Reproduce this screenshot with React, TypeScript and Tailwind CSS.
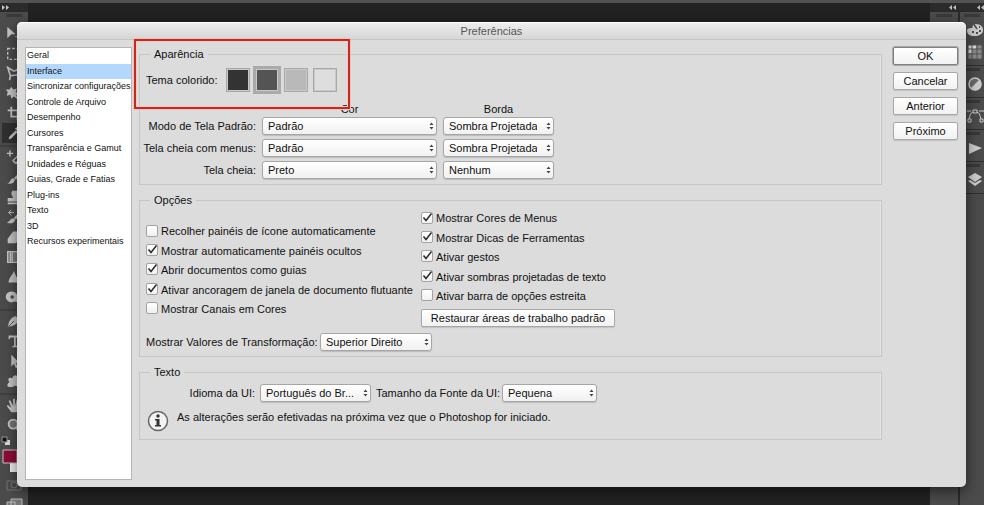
import type { ReactNode } from "react";
import { clsx } from "clsx";

const SECTIONS = [
	"Geral",
	"Interface",
	"Sincronizar configurações",
	"Controle de Arquivo",
	"Desempenho",
	"Cursores",
	"Transparência e Gamut",
	"Unidades e Réguas",
	"Guias, Grade e Fatias",
	"Plug-ins",
	"Texto",
	"3D",
	"Recursos experimentais",
];

const THEMES = [
	{ name: "Preto", color: "bg-[#333333]" },
	{ name: "Cinza escuro", color: "bg-[#545454]" },
	{ name: "Cinza médio", color: "bg-[#b9b9b9]" },
	{ name: "Cinza claro", color: "bg-[#dedede]" },
];

const SCREEN_MODES = [
	{ id: "standard", label: "Modo de Tela Padrão:", color: "Padrão", border: "Sombra Projetada" },
	{ id: "menus", label: "Tela cheia com menus:", color: "Padrão", border: "Sombra Projetada" },
	{ id: "full", label: "Tela cheia:", color: "Preto", border: "Nenhum" },
];

const LEFT_OPTIONS = [
	{ label: "Recolher painéis de ícone automaticamente", on: false },
	{ label: "Mostrar automaticamente painéis ocultos", on: true },
	{ label: "Abrir documentos como guias", on: true },
	{ label: "Ativar ancoragem de janela de documento flutuante", on: true },
	{ label: "Mostrar Canais em Cores", on: false },
];

const RIGHT_OPTIONS = [
	{ label: "Mostrar Cores de Menus", on: true },
	{ label: "Mostrar Dicas de Ferramentas", on: true },
	{ label: "Ativar gestos", on: true },
	{ label: "Ativar sombras projetadas de texto", on: true },
	{ label: "Ativar barra de opções estreita", on: false },
];

// Tool glyphs are drawn in a 20x20 box.
const TOOLS: { name: string; icon: ReactNode }[][] = [
	[
		{ name: "Mover", icon: <path d="M3 4l8 7H7l-4 4zM11 14h7M14 11v7" fill="currentColor" stroke="currentColor" strokeWidth="0.8" /> },
		{ name: "Seleção", icon: <path d="M3 5h14v12H3z" fill="none" stroke="currentColor" strokeWidth="1.5" strokeDasharray="3 2" /> },
		{ name: "Laço", icon: <path d="M5 18l1-5-3-9 7 4 7-3-2 7-9 1" fill="none" stroke="currentColor" strokeWidth="1.8" /> },
		{ name: "Varinha", icon: <path d="M7 3l2 3 4-1-1 4 3 2-3 2 6 5-2 1-6-5-3 2-1-4-4 1 1-4-2-3 4 0z" fill="currentColor" /> },
		{ name: "Corte", icon: <path d="M7 3v11h11M3 7h11v11" fill="none" stroke="currentColor" strokeWidth="2" /> },
		{ name: "Conta-gotas", icon: <path d="M4 17l1-3 7-7 2 2-7 7zM11 5l3-2 3 3-2 3z" fill="currentColor" /> },
	],
	[
		{ name: "Recuperação", icon: <path d="M2 6h7M5.500 2.500v7M9 13a4 4 0 1 0 4-4M9 14l3 3 6-6-3-3z" fill="none" stroke="currentColor" strokeWidth="1.5" /> },
		{ name: "Pincel", icon: <path d="M2 17c4 0 3-4 7-6l2 2c-1 5-6 5-9 4zM10 11l8-8v3l-6 7z" fill="currentColor" /> },
		{ name: "Carimbo", icon: <path d="M8 3h6l1 3-2 5h5v4H3v-4h6L7 6zM3 16h15v2H3z" fill="currentColor" /> },
		{ name: "Histórico", icon: <path d="M3 16c3 0 2-4 6-4l2 1c-1 4-5 4-8 3zM10 11l8-7v3l-6 5zM4 5h6M4 5l3-3M4 5l3 3" fill="currentColor" stroke="currentColor" /> },
		{ name: "Borracha", icon: <path d="M3 12l6-8h9v6l-6 7H3z" fill="currentColor" /> },
		{ name: "Degradê", icon: <path d="M3 4h15v12H3zM6 5v10M8 5v10" fill="#777" stroke="currentColor" strokeWidth="1.5" /> },
		{ name: "Desfoque", icon: <path d="M10 3c1 4 4 8 5 13H4c0-5 5-9 6-13z" fill="currentColor" /> },
		{ name: "Subexposição", icon: <path d="M8 4a6 6 0 1 0 2 11l7 1v-5l-3-1a6 6 0 0 0-6-6zM8 8a2 2 0 1 1 0 4 2 2 0 0 1 0-4z" fill="currentColor" fillRule="evenodd" /> },
	],
	[
		{ name: "Caneta", icon: <path d="M3 17c0-6 3-11 9-13l4 5c-3 6-7 7-13 8zM4 16l6-6" fill="currentColor" stroke="#4b4b4b" /> },
		{ name: "Texto", icon: <path d="M4 4h14v4h-1l-1-2h-4v9l2 1v1H8v-1l2-1V6H6L5 8H4z" fill="currentColor" /> },
		{ name: "Seleção de caminho", icon: <path d="M7 3v13l3-3 2 5 2-1-2-5h4z" fill="currentColor" /> },
		{ name: "Forma", icon: <path d="M3 16c-1-3 1-4 2-5-3-3 0-6 3-4 2-5 6-4 6 0 4 0 4 4 1 5 2 3-1 5-4 3-2 2-6 2-8 1z" fill="currentColor" /> },
	],
	[
		{ name: "Mão", icon: <path d="M7 18l-5-7 1-1 4 3-3-8h2l3 6V3h2v8l2-7h1v7l3-4 1 1-3 7-2 3z" fill="currentColor" /> },
		{ name: "Zoom", icon: <path d="M9 4a5 5 0 1 1 0 10A5 5 0 0 1 9 4zM12 13l4 4" fill="#777" stroke="currentColor" strokeWidth="2" /> },
	],
];

// Panel glyphs are drawn in an 18x18 box.
const PANELS: { name: string; icon: ReactNode }[][] = [
	[
		{
			name: "Cor",
			icon: (
				<>
					<path d="M9 3c6 0 8 3 8 6 0 4-4 6-9 6-4 0-7-2-7-5s3-3 5-3c1 0 0-4 3-4z" fill="currentColor" />
					<path d="M6 11h2M10 12h2M13 10h2M13 6h1" stroke="#4b4b4b" strokeWidth="2" />
					<path d="M7 2l4 6" stroke="#4b4b4b" strokeWidth="1.500" />
				</>
			),
		},
		{
			name: "Amostras",
			icon: (
				<>
					<path d="M2 2h14v14H2z" fill="#8a8a8a" />
					<path d="M2 2h4v4H2zM6 2h4v4H6zM2 6h4v4H2z" fill="#dddddd" />
					<path d="M2 2h14v14H2zM6 2v14M11 2v14M2 6h14M2 11h14" fill="none" stroke="#555" />
				</>
			),
		},
	],
	[
		{
			name: "Ajustes",
			icon: (
				<>
					<circle cx="9" cy="9" r="6" fill="#6a6a6a" stroke="currentColor" strokeWidth="1.5" />
					<path d="M4.500 13.500A6 6 0 0 0 13.500 4.500z" fill="currentColor" />
				</>
			),
		},
	],
	[
		{
			name: "Demarcadores",
			icon: (
				<path d="M1 4h4M13 4h5M7 3h4v3H7zM7 5c-3 1-3 4-4 7M11 5c3 1 3 4 4 7M2 12h3v3H2zM14 12h3v3h-3z" fill="none" stroke="currentColor" />
			),
		},
	],
	[{ name: "Ações", icon: <path d="M3 4l13 5-13 6z" fill="currentColor" /> }],
	[
		{
			name: "Camadas",
			icon: (
				<>
					<path d="M9 2l7 4-7 5-7-5z" fill="currentColor" />
					<path d="M2 10l2-1 5 3 5-3 2 1-7 5z" fill="currentColor" />
				</>
			),
		},
	],
];

function Toolbar() {
	return (
		<aside className="w-7 shrink-0 bg-[#4b4b4b] text-[#c6c6c6]">
			<div className="flex h-[9px] items-center bg-[#2b2b2b] pl-0.5">
				<svg viewBox="0 0 7 5" className="h-[5px] w-[7px]">
					<path d="M0 0l3 2.500L0 5zM4 0l3 2.500L4 5z" fill="currentColor" />
				</svg>
			</div>
			<div className="mx-1.5 mt-0.5 mb-1.5 h-[3px] bg-[#3a3a3a]" />
			{TOOLS.map((group, i) => (
				<div key={i} className={clsx(i > 0 && "mt-0.5 border-t-2 border-[#404040]")}>
					{group.map((tool) => (
						<button
							key={tool.name}
							type="button"
							aria-label={tool.name}
							className={clsx(
								"ml-0.5 flex h-5 w-[26px] items-center pl-[3px]",
								tool.name === "Conta-gotas" && "bg-[#303030]",
							)}
						>
							<svg viewBox="0 0 20 20" className="size-[18px]">
								{tool.icon}
							</svg>
						</button>
					))}
				</div>
			))}
			<svg viewBox="0 0 28 72" className="h-[72px] w-7">
				<path d="M5 5h5v5H5z" fill="#ddd" />
				<path d="M2 2h5v5H2z" fill="#111" stroke="#999" />
				<path d="M10 26h12v11H10z" fill="#f0f0f0" />
				<path d="M3 15h14v13H3z" fill="#8c0b37" stroke="#c4c4c4" />
				<path d="M7 46h14v9H7z" fill="none" stroke="#757575" />
				<circle cx="14" cy="50" r="3" fill="none" stroke="#757575" />
				<path d="M11 64h11v9H11zM7 67h8v8H7z" fill="#777" stroke="#bbb" />
			</svg>
		</aside>
	);
}

function Collapse() {
	return (
		<svg viewBox="0 0 7 5" className="h-[5px] w-[7px]">
			<path d="M3 0L0 2.500 3 5zM7 0L4 2.500 7 5z" fill="#bdbdbd" />
		</svg>
	);
}

function PanelDock() {
	return (
		<aside className="flex shrink-0 gap-0.5 bg-[#2b2b2b]">
			<div className="w-7 bg-[#4b4b4b]">
				<div className="flex h-[9px] items-center justify-end bg-[#2b2b2b] pr-0.5">
					<Collapse />
				</div>
				<div className="mx-1.5 mt-0.5 h-[3px] bg-[#3a3a3a]" />
			</div>
			<div className="w-6 bg-[#4b4b4b] text-[#cccccc]">
				<div className="flex h-[9px] items-center justify-end bg-[#2b2b2b]">
					<Collapse />
				</div>
				{PANELS.map((group, i) => (
					<div key={i} className="border-b border-[#2f2f2f] pt-0.5 pb-1">
						<div className="mr-1 mb-1 ml-1 h-[3px] bg-[#383838]" />
						<div className="flex flex-col gap-1">
							{group.map((panel) => (
								<button
									key={panel.name}
									type="button"
									aria-label={panel.name}
									className="flex justify-end"
								>
									<svg viewBox="0 0 18 18" className="size-[18px]">
										{panel.icon}
									</svg>
								</button>
							))}
						</div>
					</div>
				))}
			</div>
		</aside>
	);
}

function Select({ id, value, label, className }: { id: string; value: string; label?: string; className: string }) {
	return (
		<span className={clsx("relative block", className)}>
			<select
				id={id}
				aria-label={label}
				className="block h-[18px] w-full appearance-none rounded-[3px] border border-[#a6a6a6] bg-linear-to-b from-white to-[#f1f1f1] pr-4 pl-[5px] leading-4 text-[#111] shadow-[0_1px_1px_rgba(0,0,0,0.15)]"
			>
				<option>{value}</option>
			</select>
			<svg viewBox="0 0 5 8" className="pointer-events-none absolute top-[5px] right-[3px] h-2 w-[5px]">
				<path d="M0.500 3l2-2.500 2 2.500zM0.500 5h4l-2 2.500z" fill="#444" />
			</svg>
		</span>
	);
}

function CheckList({ options }: { options: { label: string; on: boolean }[] }) {
	return (
		<div className="grid h-[97px] auto-rows-fr">
			{options.map((option) => (
				<label key={option.label} className="flex items-center gap-[3px] whitespace-nowrap">
					<span className="relative">
						<input
							type="checkbox"
							defaultChecked={option.on}
							className="peer block size-3 appearance-none rounded-xs border border-[#a3a3a3] bg-linear-to-b from-white to-[#f0f0f0]"
						/>
						<svg viewBox="0 0 12 12" className="pointer-events-none absolute inset-0 hidden size-3 peer-checked:block">
							<path d="M2.500 5.500L5 8.500 10.500 1.500" fill="none" stroke="#2b2b2b" strokeWidth="1.500" />
						</svg>
					</span>
					<span className="pt-0.5">{option.label}</span>
				</label>
			))}
		</div>
	);
}

function Group({ title, children, className }: { title: string; children: ReactNode; className: string }) {
	return (
		<fieldset className={clsx("min-w-0 border border-[#c6c6c6] px-1.5 shadow-[inset_-1px_0_0_#e4e4e4]", className)}>
			<legend className="ml-1 px-1 leading-[14px]">{title}</legend>
			{children}
		</fieldset>
	);
}

function Button({ children, primary, className }: { children: ReactNode; primary?: boolean; className?: string }) {
	return (
		<button
			type="button"
			className={clsx(
				"h-[18px] rounded-xs border bg-linear-to-b from-white to-[#f2f2f2] leading-4 text-[#111]",
				primary ? "border-[#808080] shadow-[0_0_0_1px_#a8a8a8]" : "border-[#a8a8a8] shadow-[0_1px_1px_rgba(0,0,0,0.12)]",
				className,
			)}
		>
			{children}
		</button>
	);
}

function Appearance() {
	return (
		<Group title="Aparência" className="pb-[5px]">
			<div role="radiogroup" aria-label="Tema colorido" className="flex h-[33px] items-center pt-[5px]">
				<span className="w-[77px]">Tema colorido:</span>
				{THEMES.map((theme, i) => (
					<span key={theme.name} className="flex w-[29px] justify-center">
						<input
							type="radio"
							name="theme"
							aria-label={theme.name}
							defaultChecked={i === 1}
							className={clsx(
								"size-6 appearance-none border border-[#a8a8a8] shadow-[inset_0_0_0_1px_#c9c9c9] checked:size-7 checked:border-3 checked:border-[#aaaaaa]",
								theme.color,
							)}
						/>
					</span>
				))}
			</div>
			<div className="mt-2 grid grid-cols-[110px_175px_111px] gap-x-1.5 gap-y-1">
				<span className="col-start-2 -mb-[3px] text-center leading-[14px]">Cor</span>
				<span className="-mb-[3px] text-center leading-[14px]">Borda</span>
				{SCREEN_MODES.map((mode) => (
					<div key={mode.id} className="contents">
						<label htmlFor={`${mode.id}-color`} className="justify-self-end leading-[18px] whitespace-nowrap">
							{mode.label}
						</label>
						<Select id={`${mode.id}-color`} value={mode.color} className="w-full" />
						<Select id={`${mode.id}-border`} label={`${mode.label} borda`} value={mode.border} className="w-full" />
					</div>
				))}
			</div>
		</Group>
	);
}

function Options() {
	return (
		<Group title="Opções" className="pb-[5px]">
			<div className="flex pt-px">
				<div className="w-[275px] pt-[13px]">
					<CheckList options={LEFT_OPTIONS} />
					<div className="mt-[15px] flex items-center gap-1.5 whitespace-nowrap">
						<label htmlFor="transform" className="w-[168px]">
							Mostrar Valores de Transformação:
						</label>
						<Select id="transform" value="Superior Direito" className="w-28 shrink-0" />
					</div>
				</div>
				<div>
					<CheckList options={RIGHT_OPTIONS} />
					<Button className="mt-1 w-[194px]">Restaurar áreas de trabalho padrão</Button>
				</div>
			</div>
		</Group>
	);
}

function TextSettings() {
	return (
		<Group title="Texto" className="pb-[7px]">
			<div className="flex items-center gap-[5px] pt-[5px] whitespace-nowrap">
				<label htmlFor="language" className="w-[109px] text-right">
					Idioma da UI:
				</label>
				<Select id="language" value="Português do Br..." className="w-[111px]" />
				<label htmlFor="font-size" className="w-[121px]">
					Tamanho da Fonte da UI:
				</label>
				<Select id="font-size" value="Pequena" className="w-[95px]" />
			</div>
			<div className="mt-2 flex gap-2 pl-px">
				<svg viewBox="0 0 22 22" className="size-[22px]">
					<circle cx="11" cy="11" r="9.500" fill="#f2f2f2" stroke="#666" strokeWidth="1.500" />
					<circle cx="11" cy="6" r="1.700" fill="#333" />
					<path d="M8 9h4.500v6H14v1.500H8V15h1.500v-4.500H8z" fill="#333" />
				</svg>
				<p className="leading-[14px]">
					As alterações serão efetivadas na próxima vez que o Photoshop for iniciado.
				</p>
			</div>
		</Group>
	);
}

function PreferencesDialog() {
	return (
		<section
			role="dialog"
			aria-labelledby="dialog-title"
			className="absolute top-[22px] right-[18px] left-[17px] rounded-[5px] bg-[#dcdcdc] shadow-[0_4px_14px_rgba(0,0,0,0.55)]"
		>
			<h1
				id="dialog-title"
				className="h-[18px] rounded-t-[5px] border-t border-b border-t-white border-b-[#c4c4c4] bg-linear-to-b from-[#eeeeee] to-[#d6d6d6] text-center leading-4 text-[#555]"
			>
				Preferências
			</h1>
			<div className="flex px-2 py-[7px]">
				<nav className="min-h-[433px] w-[107px] shrink-0 border border-[#b4b4b4] bg-white text-[9px]">
					<ul className="grid h-[202px] auto-rows-fr">
						{SECTIONS.map((section) => (
							<li key={section} className={clsx("flex items-center", section === "Interface" && "bg-[#b3d7fd]")}>
								<a href="#" className="pl-px whitespace-nowrap">
									{section}
								</a>
							</li>
						))}
					</ul>
				</nav>
				<form className="ml-[7px] flex min-w-0 flex-1 flex-col gap-2">
					<Appearance />
					<Options />
					<TextSettings />
				</form>
				<div className="ml-[11px] flex w-[65px] flex-col gap-[7px]">
					<Button primary>OK</Button>
					<Button>Cancelar</Button>
					<Button>Anterior</Button>
					<Button>Próximo</Button>
				</div>
			</div>
			{/* highlight around the theme picker */}
			<div className="pointer-events-none absolute top-[17px] left-[117px] h-[70px] w-[216px] border-2 border-[#c9281f] shadow-[0_0_0_1px_#e8c4bf,inset_0_0_0_1px_#efcbc6]" />
		</section>
	);
}

export default function App() {
	return (
		<div className="relative flex min-h-screen flex-col overflow-hidden bg-[#222222] font-['Liberation_Sans',Arial,sans-serif] text-[11px] text-[#111]">
			<div className="h-[3px] bg-[#535353]" />
			<div className="flex flex-1">
				<Toolbar />
				<main className="flex-1" />
				<PanelDock />
			</div>
			<PreferencesDialog />
		</div>
	);
}
